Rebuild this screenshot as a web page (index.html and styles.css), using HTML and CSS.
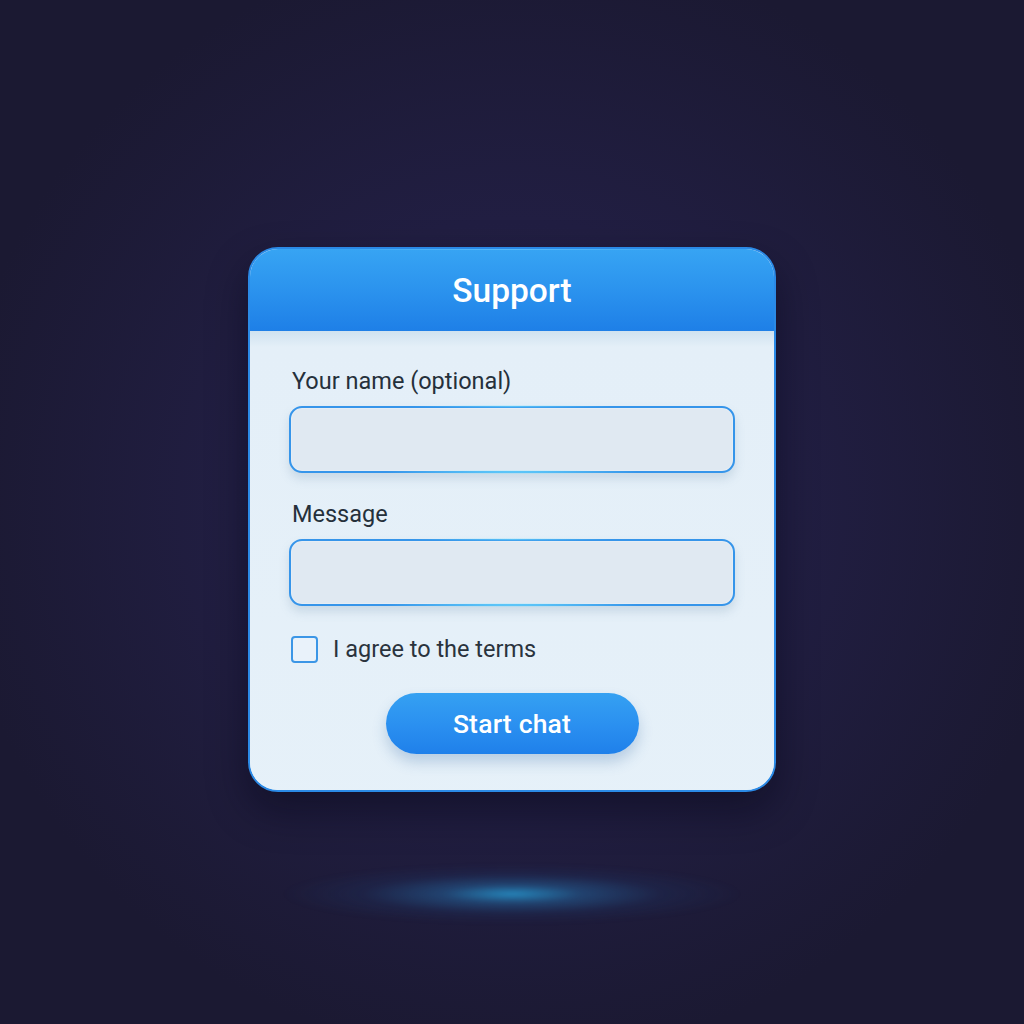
FILE: index.html
```html
<!DOCTYPE html>
<html>
<head>
<meta charset="utf-8">
<link rel="stylesheet" href="styles.css">
</head>
<body>
<div class="stage">
  <div class="card">
    <div class="card-header">Support</div>
    <div class="card-body">
      <label class="field-label">Your name (optional)</label>
      <div class="input"></div>
      <label class="field-label second">Message</label>
      <div class="input"></div>
      <div class="check-row">
        <span class="checkbox"></span>
        <span class="check-text">I agree to the terms</span>
      </div>
      <div class="btn-row">
        <button class="btn">Start chat</button>
      </div>
    </div>
  </div>
  <div class="floor-glow"></div>
</div>
</body>
</html>
```
FILE: styles.css
```css
html, body {
  margin: 0;
  padding: 0;
  width: 1024px;
  height: 1024px;
  overflow: hidden;
}
body {
  background: radial-gradient(ellipse 560px 560px at 512px 500px, #26234a 0%, #211e42 50%, #1b1932 100%);
  font-family: Roboto, "Noto Sans", "Liberation Sans", sans-serif;
}
.stage {
  display: flex;
  flex-direction: column;
  align-items: center;
  padding-top: 247px;
}
.card {
  position: relative;
  width: 528px;
  height: 545px;
  box-sizing: border-box;
  border: 2px solid #2b8ae6;
  border-radius: 30px;
  background: #e5f0f8;
  overflow: hidden;
  box-shadow: 0 18px 40px rgba(5, 5, 20, 0.45);
}
.card::before {
  content: "";
  position: absolute;
  left: 110px;
  right: 110px;
  top: -2px;
  height: 3px;
  background: radial-gradient(ellipse at center, rgba(150, 235, 255, 0.95) 0%, rgba(120, 210, 255, 0.4) 50%, rgba(120, 210, 255, 0) 100%);
  z-index: 2;
}
.card-header {
  height: 82px;
  background: linear-gradient(180deg, #37a4f3 0%, #2b93ee 50%, #1e7fe7 100%);
  color: #ffffff;
  font-size: 33.5px;
  font-weight: 500;
  display: flex;
  align-items: center;
  justify-content: center;
  box-sizing: border-box;
}
.card-body {
  padding: 37px 39px 0 39px;
  background: linear-gradient(180deg, #cfe2f0 0px, #e4eff8 16px, #e6f1f9 100%);
  height: 100%;
}
.field-label {
  display: block;
  font-size: 23.5px;
  line-height: 26px;
  color: #25303b;
  margin-bottom: 12px;
  margin-left: 3px;
}
.field-label.second {
  margin-top: 28px;
}
.input {
  height: 67px;
  box-sizing: border-box;
  border: 2px solid #3695ea;
  border-radius: 13px;
  background: #e0e9f2;
  box-shadow: 0 6px 10px rgba(120, 150, 180, 0.25), inset 0 0 0 1px rgba(255,255,255,0.2);
  position: relative;
}
.input::after {
  content: "";
  position: absolute;
  left: 90px;
  right: 90px;
  bottom: -3px;
  height: 4px;
  background: radial-gradient(ellipse at center, rgba(110, 220, 255, 0.9) 0%, rgba(110, 220, 255, 0) 70%);
}
.input::before {
  content: "";
  position: absolute;
  left: 120px;
  right: 120px;
  top: -3px;
  height: 3px;
  background: radial-gradient(ellipse at center, rgba(110, 220, 255, 0.6) 0%, rgba(110, 220, 255, 0) 70%);
}
.check-row {
  display: flex;
  align-items: center;
  margin-top: 29px;
  padding-left: 2px;
}
.checkbox {
  width: 27px;
  height: 27px;
  box-sizing: border-box;
  border: 2px solid #3b96e6;
  border-radius: 4px;
  background: #e9f2fa;
}
.check-text {
  margin-left: 15px;
  font-size: 23.5px;
  color: #2a333d;
}
.btn-row {
  display: flex;
  justify-content: center;
  margin-top: 30px;
}
.btn {
  width: 253px;
  height: 61px;
  border: none;
  border-radius: 31px;
  background: linear-gradient(180deg, #35a1f2 0%, #2a8ff0 55%, #1f80ea 100%);
  color: #ffffff;
  font-family: Roboto, "Noto Sans", "Liberation Sans", sans-serif;
  font-size: 26.5px;
  font-weight: 500;
  letter-spacing: 0.2px;
  box-shadow: 0 8px 14px rgba(60, 110, 170, 0.28);
  padding: 0;
}
.floor-glow {
  margin-top: 72px;
  width: 460px;
  height: 60px;
  background: radial-gradient(ellipse 50% 50% at center, rgba(40, 170, 230, 0.75) 0%, rgba(40, 140, 210, 0.35) 30%, rgba(30, 90, 160, 0.12) 65%, rgba(30, 60, 120, 0) 100%);
  filter: blur(2px);
}
```
